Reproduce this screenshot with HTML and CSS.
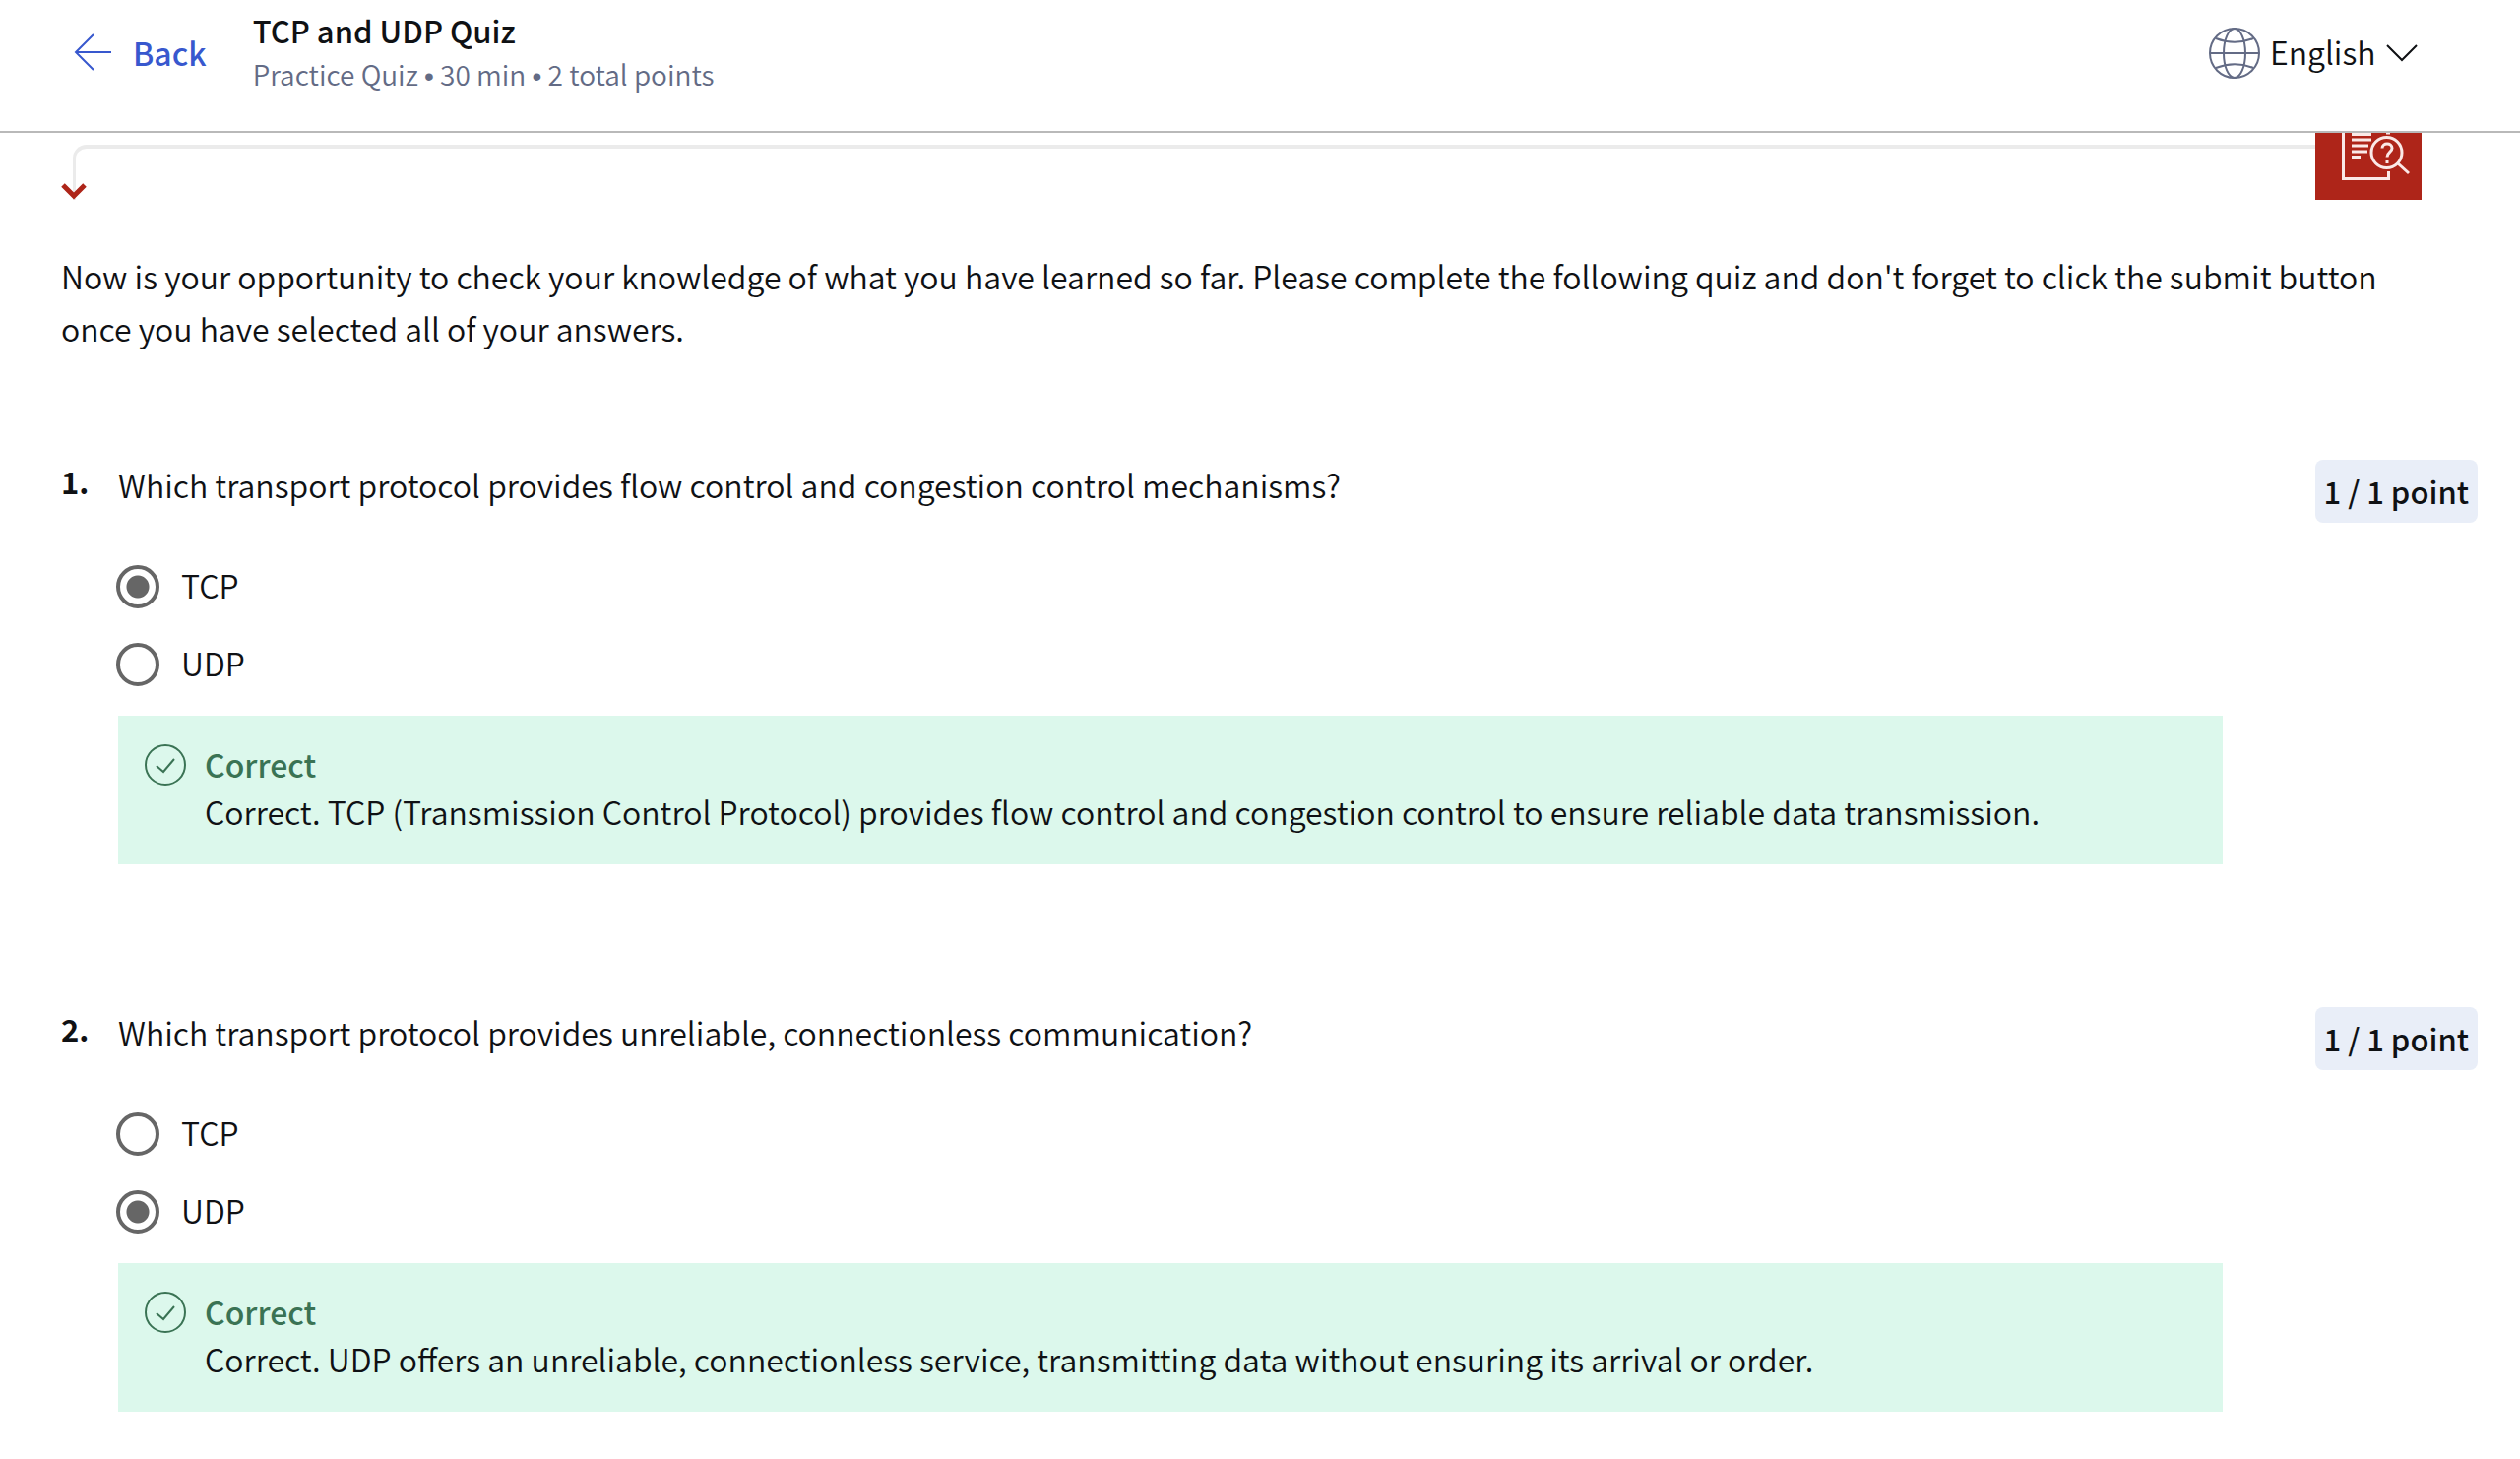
FILE: index.html
```html
<!DOCTYPE html>
<html lang="en">
<head>
<meta charset="utf-8">
<title>TCP and UDP Quiz</title>
<link rel="stylesheet" href="styles.css">
</head>
<body>
<header class="topbar">
  <a class="back" href="#">
    <svg class="back-icon" viewBox="0 0 38 38" aria-hidden="true"><path d="M20 1 2 19l18 18M2 19h36"/></svg>
    <span>Back</span>
  </a>
  <div class="heading">
    <h1 class="title">TCP and UDP Quiz</h1>
    <p class="meta">Practice Quiz <span class="dot">•</span> 30 min <span class="dot">•</span> 2 total points</p>
  </div>
  <div class="language">
    <svg class="globe" viewBox="0 0 52 52" aria-hidden="true">
      <circle cx="26" cy="26" r="25"/>
      <ellipse cx="26" cy="26" rx="11" ry="25"/>
      <path d="M1 26h50M7 11q19 7.500 38 0M7 41q19-7.500 38 0"/>
    </svg>
    <select class="language-select" aria-label="Language"><option>English</option></select>
    <svg class="chevron" viewBox="0 0 32 18" aria-hidden="true"><path d="M1 1l15 15L31 1"/></svg>
  </div>
</header>
<main class="page">
  <div class="banner">
    <div class="connector">
      <svg class="arrowhead" viewBox="0 0 26 18" aria-hidden="true"><path d="M2 3l11 11L24 3"/></svg>
    </div>
    <svg class="tile" viewBox="0 0 108 68" aria-hidden="true">
      <path class="tile-bg" d="M0 0h108v68H0z"/>
      <path class="tile-page" d="M28.500 0v46.500h46V39"/>
      <path class="tile-lines" d="M37 1.500h20M37 7h20M37 13h17M37 19h16M37 24.500h9M72 0h4"/>
      <circle class="tile-lens" cx="72.500" cy="20" r="15.500"/>
      <path class="tile-handle" d="M84 31l11 10"/>
      <path class="tile-mark" d="M68 15.500c0-6 10-6 10 0 0 4-5 4-5 9M73 28v3"/>
    </svg>
  </div>
  <p class="intro">Now is your opportunity to check your knowledge of what you have learned so far. Please complete the following quiz and don't forget to click the submit button once you have selected all of your answers.</p>

  <section class="question">
    <span class="number">1.</span>
    <div class="body">
      <h2 class="prompt">Which transport protocol provides flow control and congestion control mechanisms?</h2>
      <label class="option"><input class="radio" type="radio" name="q1" checked><span>TCP</span></label>
      <label class="option"><input class="radio" type="radio" name="q1"><span>UDP</span></label>
      <div class="feedback">
        <svg class="check" viewBox="0 0 42 42" aria-hidden="true"><circle cx="21" cy="21" r="20"/><path d="M12 22l7 6 11-13"/></svg>
        <div>
          <p class="verdict">Correct</p>
          <p class="reason">Correct. TCP (Transmission Control Protocol) provides flow control and congestion control to ensure reliable data transmission.</p>
        </div>
      </div>
    </div>
    <span class="points">1 / 1 point</span>
  </section>

  <section class="question">
    <span class="number">2.</span>
    <div class="body">
      <h2 class="prompt">Which transport protocol provides unreliable, connectionless communication?</h2>
      <label class="option"><input class="radio" type="radio" name="q2"><span>TCP</span></label>
      <label class="option"><input class="radio" type="radio" name="q2" checked><span>UDP</span></label>
      <div class="feedback">
        <svg class="check" viewBox="0 0 42 42" aria-hidden="true"><circle cx="21" cy="21" r="20"/><path d="M12 22l7 6 11-13"/></svg>
        <div>
          <p class="verdict">Correct</p>
          <p class="reason">Correct. UDP offers an unreliable, connectionless service, transmitting data without ensuring its arrival or order.</p>
        </div>
      </div>
    </div>
    <span class="points">1 / 1 point</span>
  </section>
</main>
</body>
</html>
```
FILE: styles.css
```css
* { box-sizing: border-box; }

body {
  margin: 0;
  background: #fff;
  color: #0f1114;
  font-family: "Source Sans Pro", "Noto Sans CJK SC", sans-serif;
  font-size: 32px;
  font-weight: 350;
  line-height: 48px;
}

h1, h2, p { margin: 0; font-size: inherit; font-weight: inherit; }

svg { display: block; flex: none; fill: none; }

.topbar {
  display: flex;
  align-items: flex-start;
  padding: 8px 104px 36px 75px;
  border-bottom: 2px solid #b9b9b9;
}

.back {
  display: flex;
  align-items: center;
  gap: 22px;
  margin: 22px 47px 0 0;
  color: #3858ce;
  font-weight: 500;
  line-height: 46px;
  text-decoration: none;
}

.back-icon { width: 38px; height: 38px; stroke: currentColor; stroke-width: 2; }

.title { font-size: 31px; line-height: 45px; font-weight: 500; }

.meta { font-size: 28px; line-height: 44px; color: #636b85; }

.dot { font-family: "Liberation Sans", sans-serif; line-height: 1; }

.language {
  display: flex;
  align-items: center;
  gap: 10px;
  margin: 20px 0 0 auto;
}

.globe { width: 52px; height: 52px; stroke: #636b85; stroke-width: 2; }

.language-select {
  appearance: none;
  border: 0;
  padding: 0 0 4px;
  background: none;
  color: inherit;
  font: inherit;
}

.chevron { width: 32px; height: 18px; stroke: #0f1114; stroke-width: 2; }

.page { padding: 0 43px 48px 62px; }

.banner {
  display: flex;
  align-items: flex-end;
  height: 68px;
  margin-right: 57px;
}

.connector {
  position: relative;
  flex: 1;
  height: 56px;
  margin-left: 12px;
  border: solid #ebebeb;
  border-width: 4px 0 0 3px;
  border-radius: 14px 0 0 0;
}

.arrowhead {
  position: absolute;
  left: -15px;
  bottom: 0;
  width: 26px;
  height: 18px;
  stroke: #ae2519;
  stroke-width: 5;
}

.tile { width: 108px; height: 68px; stroke: #fbe9e7; stroke-width: 3; }
.tile-bg { fill: #ae2519; stroke: none; }

.intro { margin: 51px 80px 0 0; line-height: 53px; }

.question { display: flex; align-items: flex-start; margin-top: 107px; }

.question + .question { margin-top: 145px; }

.number { flex: none; width: 58px; line-height: 44px; font-weight: 700; font-size: 31px; }

.body { flex: 1; margin-right: 94px; }

.prompt { line-height: 50px; margin-bottom: 52px; }

.option {
  display: flex;
  align-items: center;
  gap: 22px;
  width: max-content;
  height: 54px;
  margin: 0 0 25px -2px;
  line-height: 44px;
}

.option span { padding-bottom: 4px; }

.radio {
  appearance: none;
  width: 44px;
  height: 44px;
  margin: 0;
  border: 4px solid #666;
  border-radius: 50%;
}

.radio:checked { background: radial-gradient(circle, #666 11px, transparent 12px); }

.feedback {
  display: flex;
  gap: 19px;
  padding: 25px 27px 30px;
  background: #dcf8ec;
}

.check { width: 42px; height: 42px; margin-top: 4px; stroke: #3a7354; stroke-width: 2; }

.verdict { color: #3a7354; font-weight: 500; }

.points {
  flex: none;
  padding: 9px;
  border-radius: 8px;
  background: #e9eef8;
  font-weight: 500;
  font-size: 31px;
  line-height: 46px;
}
```
